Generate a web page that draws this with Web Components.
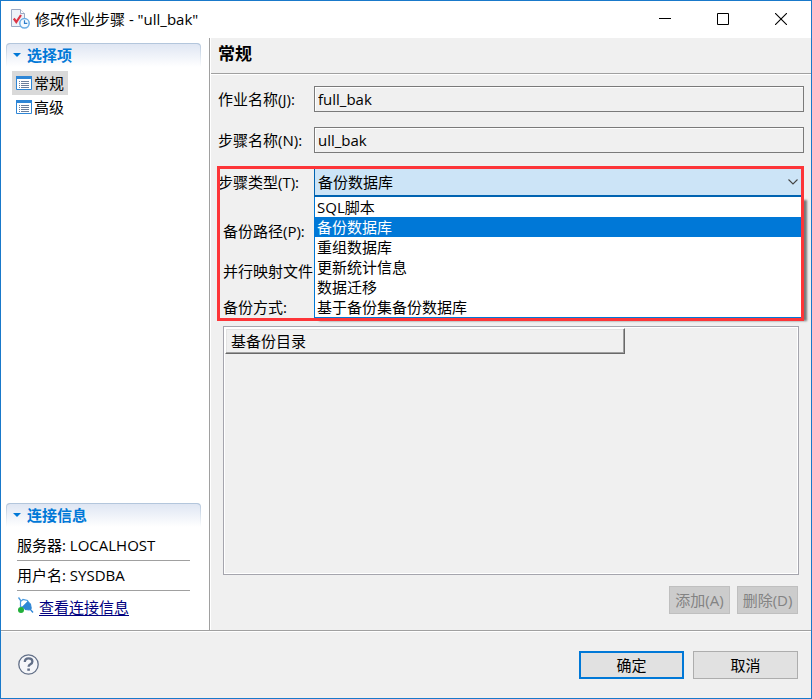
<!DOCTYPE html>
<html lang="zh-CN">
<head>
<meta charset="utf-8">
<title>修改作业步骤</title>
<style>
  body { margin: 0; color: #000; font: 15px/20px "Open Sans", "Noto Sans CJK SC", sans-serif; }
</style>
</head>
<body>
<job-dialog></job-dialog>
<script>
const define = (name, html, setup) => {
  const template = document.createElement('template');
  template.innerHTML = html;
  customElements.define(name, class extends HTMLElement {
    constructor() {
      super();
      this.attachShadow({ mode: 'open' }).append(template.content.cloneNode(true));
    }
    connectedCallback() { if (setup) setup(this, this.shadowRoot); }
  });
};

define('title-bar', `
<style>
  :host { display: flex; align-items: center; height: 37px; box-sizing: border-box; background: #fff; padding: 0 1px 2px 9px; }
  .logo { width: 20px; height: 20px; margin-right: 5px; }
  h1 { flex: 1; margin: 0; font-size: 15px; font-weight: 400; }
  button { width: 58px; height: 35px; border: 0; padding: 0; background: none; display: grid; place-items: center; }
</style>
<svg class="logo" viewBox="0 0 20 20" aria-hidden="true">
  <path d="M1.5.5h9l4 4v13h-13z" fill="#eef2f8" stroke="#9aa9c4"/>
  <path d="M10.5.5v4h4" fill="#fff" stroke="#9aa9c4"/>
  <path d="M3.800 9.500l2.500 3.500L11 6" fill="none" stroke="#dc3545" stroke-width="2.200"/>
  <circle cx="14.500" cy="14.300" r="4.700" fill="#f4faff" stroke="#6bade4" stroke-width="1.500"/>
  <path d="M14.500 11.300v3h2.800" fill="none" stroke="#2e7fcc" stroke-width="1.200"/>
</svg>
<h1><slot></slot></h1>
<button aria-label="最小化"><svg width="12" height="12"><path d="M0 5.5h12" stroke="#000"/></svg></button>
<button aria-label="最大化"><svg width="12" height="12"><path d="M.5.5h11v11H.5z" fill="none" stroke="#000"/></svg></button>
<button aria-label="关闭"><svg width="12" height="12"><path d="M0 0l12 12M12 0L0 12" stroke="#000" stroke-width="1.1"/></svg></button>
`);

define('side-section', `
<style>
  :host { display: block; }
  h2 { display: flex; align-items: center; height: 24px; margin: 0; padding: 0 0 0 6px; box-sizing: border-box;
    font-size: 15px; line-height: 20px; font-weight: 700; color: #0078d7; padding-bottom: 2px;
    border: 1px solid transparent; border-bottom: 0; border-top-color: #b3c6dc; border-radius: 4px 4px 0 0;
    background: linear-gradient(#dfe6f3, #fff) padding-box, linear-gradient(#b3c6dc, #fff) border-box; }
  svg { width: 8px; height: 4px; margin-right: 6px; }
</style>
<h2><svg viewBox="0 0 8 4" aria-hidden="true"><path d="M0 0h8L4 4z" fill="#0078d7"/></svg><span></span></h2>
<slot></slot>
`, (el, root) => { root.querySelector('span').textContent = el.getAttribute('heading'); });

define('nav-item', `
<style>
  :host { display: block; }
  button { display: flex; align-items: center; gap: 2px; height: 24px; margin: 0; padding: 0 4px; border: 0; background: none; font: inherit; color: inherit; }
  :host([selected]) button { background: #d9d9d9; }
</style>
<button><svg width="16" height="14" viewBox="0 0 16 14" aria-hidden="true">
  <path d="M.5.5h15v13H.5z" fill="#fff" stroke="#2e86d6"/><path d="M0 0h16v3H0z" fill="#2e86d6"/>
  <path d="M3 5.5h1M3 7.5h1M3 9.5h1M3 11.5h1M5 5.5h8M5 7.5h8M5 9.5h8M5 11.5h8" stroke="#6b7f9c"/>
</svg><slot></slot></button>
`);

define('side-panel', `
<style>
  :host { display: flex; flex-direction: column; flex: 0 0 209px; box-sizing: border-box; background: #fff; padding: 5px 8px 13px 5px; border-right: 1px solid #a0a0a0; box-shadow: 1px 0 #fff; margin-right: 1px; }
  nav { padding: 4px 6px; }
  .spacer { flex: 1; }
  .info { padding: 4px 11px 0; }
  p { margin: 0; height: 29px; line-height: 28px; border-bottom: 1px solid #a0a0a0; }
  .link { display: flex; gap: 5px; padding-top: 6px; }
  a { color: #000080; text-underline-offset: 2px; }
</style>
<side-section heading="选择项"><nav><nav-item selected>常规</nav-item><nav-item>高级</nav-item></nav></side-section>
<div class="spacer"></div>
<side-section heading="连接信息">
  <div class="info">
    <p>服务器: LOCALHOST</p>
    <p>用户名: SYSDBA</p>
    <div class="link"><svg width="17" height="17" viewBox="0 0 17 17" aria-hidden="true">
      <path d="M1.500.5L4 4" stroke="#4a9be0" stroke-width="1.300"/>
      <path d="M3.500 9.500V4.500L6 2.500l4.500 1 .5 1.500-5.500 5.500z" fill="#fff" stroke="#4a9be0" stroke-width="1.200"/>
      <path d="M11 4.500l2.500 2.500.8 4.500-2 1.500-4.300-.5L5.500 10z" fill="#2e86d6" stroke="#2e86d6"/>
      <path d="M13 12l3 3.500" stroke="#2e86d6" stroke-width="1.300"/>
      <circle cx="4" cy="13" r="3" fill="#22b03a"/>
    </svg><a href="#connection">查看连接信息</a></div>
  </div>
</side-section>
`);

define('text-field', `
<style>
  :host { display: grid; grid-template-columns: 96px minmax(0, 1fr); align-items: center; }
  label { white-space: nowrap; }
  input { box-sizing: border-box; width: 100%; height: 26px; margin: 0; padding: 0 3px; border: 1px solid #7a7a7a; box-shadow: inset 1px 1px #fff; border-radius: 0; background: #f0f0f0; font: inherit; color: inherit; outline: 0; }
  :host([compact]) { padding-left: 5px; grid-template-columns: 91px minmax(0, 1fr); }
  :host([compact]) input { height: 20px; }
</style>
<label for="f"><slot></slot></label><input id="f">
`, (el, root) => { root.querySelector('input').value = el.getAttribute('value') || ''; });

define('step-type', `
<style>
  :host { display: grid; grid-template-columns: 96px minmax(0, 1fr); position: relative; height: 31px; box-sizing: border-box; padding: 2px 2px 0 0; }
  label { line-height: 28px; }
  .box { position: relative; }
  select { appearance: none; width: 100%; height: 29px; margin: 0; padding: 0 3px; border: 1px solid #0063b1; border-bottom-width: 2px; border-radius: 0; background: #cce4f7; font: inherit; color: inherit; outline: 0; }
  svg { position: absolute; right: 4px; top: 11px; pointer-events: none; }
  ul { position: absolute; z-index: 2; top: 29px; left: 0; right: 0; margin: 0; padding: 0; list-style: none; background: #fff; border: 1px solid #0078d7; border-top: 0; box-shadow: 5px 3px 2px rgba(0, 0, 0, .5); }
  li { height: 20px; padding-left: 2px; }
  li[aria-selected=true] { background: #0078d7; color: #fff; }
</style>
<label for="type">步骤类型(T):</label>
<div class="box">
  <select id="type"><option>SQL脚本</option><option selected>备份数据库</option><option>重组数据库</option><option>更新统计信息</option><option>数据迁移</option><option>基于备份集备份数据库</option></select>
  <svg width="10" height="6" viewBox="0 0 10 6" aria-hidden="true"><path d="M.5.5L5 5 9.500.5" fill="none" stroke="#444" stroke-width="1.100"/></svg>
  <ul role="listbox" aria-label="步骤类型"></ul>
</div>
`, (el, root) => {
  const select = root.querySelector('select'), list = root.querySelector('ul');
  for (const option of select.options) {
    const li = document.createElement('li');
    li.setAttribute('role', 'option');
    li.setAttribute('aria-selected', option.selected);
    li.textContent = option.text;
    list.append(li);
  }
});

define('marked-group', `
<style>
  :host { display: flex; flex-direction: column; position: relative; padding-bottom: 4px; }
  .mark { position: absolute; z-index: 3; inset: 0 0 0 -1px; border: 3px solid #fd3538; pointer-events: none; }
</style>
<slot></slot><div class="mark"></div>
`);

define('backup-table', `
<style>
  :host { display: block; box-sizing: border-box; border: 1px solid #a5a5ad; box-shadow: inset 0 0 0 1px #fff; padding: 1px; }
  table { width: 70%; border-collapse: separate; border-spacing: 0; }
  th { height: 26px; box-sizing: border-box; padding: 0 5px; text-align: left; font-weight: 400; border: 1px solid; border-color: #fff #696969 #696969 #fff; box-shadow: inset -1px -1px #a0a0a0, inset 1px 1px #e3e3e3; background: #f0f0f0; }
</style>
<table><thead><tr><th scope="col">基备份目录</th></tr></thead></table>
`);

define('push-button', `
<style>
  :host { display: block; }
  button { box-sizing: border-box; width: 105px; height: 28px; margin: 0; padding: 0; border: 1px solid #adadad; border-radius: 0; background: #e1e1e1; font: inherit; color: #000; white-space: nowrap; }
  :host([primary]) button { border: 2px solid #0078d7; }
  :host([disabled]) button { width: 61px; background: #ccc; border-color: #bfbfbf; color: #838383; }
</style>
<button><slot></slot></button>
`, (el, root) => { root.querySelector('button').disabled = el.hasAttribute('disabled'); });

define('dialog-footer', `
<style>
  :host { display: flex; align-items: center; gap: 9px; height: 68px; box-sizing: border-box; padding: 0 13px 0 17px; border-top: 1px solid #a0a0a0; box-shadow: inset 0 1px #fff; }
  .help { width: 21px; height: 21px; padding: 0; border: 0; background: none; margin-right: auto; }
  svg { display: block; }
</style>
<button class="help" aria-label="帮助"><svg width="21" height="21" viewBox="0 0 21 21">
  <circle cx="10.500" cy="10.500" r="9.700" fill="#f5f6f9" stroke="#626f87" stroke-width="1.300"/>
  <path d="M6.800 8q0-3.700 3.800-3.700t3.800 3.100q0 1.600-2 2.900-1.800 1.100-1.800 2.500" fill="none" stroke="#626f87" stroke-width="2.300"/>
  <path d="M9.300 14.500h2.600v2.300H9.300z" fill="#626f87"/>
</svg></button>
<push-button primary>确定</push-button><push-button>取消</push-button>
`);

define('job-dialog', `
<style>
  :host { display: flex; flex-direction: column; box-sizing: border-box; min-height: 100vh; border: 1px solid #1979ca; background: #f0f0f0; }
  .body { display: flex; flex: 1; }
  main { flex: 1; min-width: 0; display: flex; flex-direction: column; }
  h2 { margin: 0; height: 35px; line-height: 32px; padding-left: 7px; font-size: 17px; font-weight: 700; border-bottom: 1px solid #a0a0a0; box-shadow: 0 1px #fff; }
  form { flex: 1; display: flex; flex-direction: column; padding: 12px 7px 16px; }
  .name { margin-bottom: 15px; }
  .step { margin-bottom: 13px; }
  .path { margin-top: 24px; }
  .map { margin-top: 20px; }
  .mode { margin-top: 16px; }
  backup-table { flex: 1; margin: 5px 5px 0; }
  .actions { display: flex; justify-content: flex-end; gap: 7px; margin: 11px 6px 0 0; }
</style>
<title-bar>修改作业步骤 - "ull_bak"</title-bar>
<div class="body">
  <side-panel></side-panel>
  <main>
    <h2>常规</h2>
    <form>
      <text-field class="name" value="full_bak">作业名称(J):</text-field>
      <text-field class="step" value="ull_bak">步骤名称(N):</text-field>
      <marked-group>
        <step-type></step-type>
        <text-field class="path" compact>备份路径(P):</text-field>
        <text-field class="map" compact>并行映射文件</text-field>
        <text-field class="mode" compact>备份方式:</text-field>
      </marked-group>
      <backup-table></backup-table>
      <div class="actions"><push-button disabled>添加(A)</push-button><push-button disabled>删除(D)</push-button></div>
    </form>
  </main>
</div>
<dialog-footer></dialog-footer>
`);
</script>
</body>
</html>
